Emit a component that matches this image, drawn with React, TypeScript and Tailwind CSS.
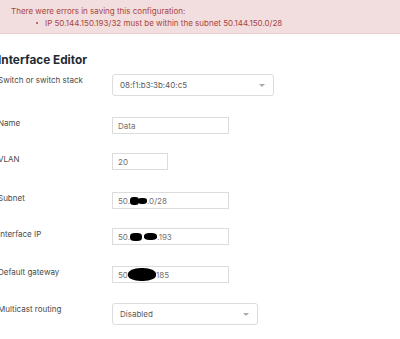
import React from 'react';

function Blob({ w, h = 7, className = '' }: { w: number; h?: number; className?: string }) {
  return (
    <span
      className={`inline-block bg-black rounded-[40%] align-middle ${className}`}
      style={{ width: w, height: h }}
    />
  );
}

function Select({ value, width }: { value: string; width: number }) {
  return (
    <div
      className="h-[22px] border border-[#dcdcdc] rounded-[3px] bg-white flex items-center justify-between pl-[7px] pr-[8px] text-[#5a5a5a]"
      style={{ width }}
    >
      <span>{value}</span>
      <span className="w-0 h-0 border-l-[3px] border-r-[3px] border-t-[3px] border-l-transparent border-r-transparent border-t-[#aaa]" />
    </div>
  );
}

function Input({ width, children }: { width: number; children: React.ReactNode }) {
  return (
    <div
      className="h-[17px] border border-[#dcdcdc] bg-white flex items-center pl-[5px] text-[#707070] whitespace-nowrap overflow-hidden"
      style={{ width }}
    >
      {children}
    </div>
  );
}

function Row({ label, children, className = '' }: { label: string; children: React.ReactNode; className?: string }) {
  return (
    <div className={`flex items-start ${className}`}>
      <div className="w-[114px] shrink-0 pt-[1px] text-[#4a4a4a]">{label}</div>
      {children}
    </div>
  );
}

export default function App() {
  return (
    <div className="w-[400px] h-[339px] bg-white overflow-hidden text-[8px] leading-[10px]" style={{ fontFamily: 'Inter, "Noto Sans", sans-serif' }}>
      <div className="h-[34px] bg-[#f2dede] border-b border-[#ebcfd3] pl-[11px] pt-[6px] text-[#a94442]">
        <div>There were errors in saving this configuration:</div>
        <div className="flex items-center mt-[2px] pl-[25px]">
          <span className="w-[2px] h-[2px] rounded-full bg-[#a94442] mr-[7px]" />
          <span>IP 50.144.150.193/32 must be within the subnet 50.144.150.0/28</span>
        </div>
      </div>

      <div className="-ml-[2px]">
        <h1 className="mt-[19px] text-[11.8px] leading-[14px] font-bold text-[#1e2a36]">Interface Editor</h1>

        <Row label="Switch or switch stack" className="mt-[7px]">
          <Select value="08:f1:b3:3b:40:c5" width={162} />
        </Row>

        <Row label="Name" className="mt-[21px]">
          <Input width={117}>Data</Input>
        </Row>

        <Row label="VLAN" className="mt-[19px]">
          <Input width={56}>20</Input>
        </Row>

        <Row label="Subnet" className="mt-[22px]">
          <Input width={117}>
            50.<Blob w={9} h={8} /><Blob w={9} h={6} className="-ml-[1px]" />.0/28
          </Input>
        </Row>

        <Row label="Interface IP" className="mt-[19px]">
          <Input width={117}>
            50.<Blob w={12} h={8} /><span className="w-[2px] inline-block" /><Blob w={13} h={7} />.193
          </Input>
        </Row>

        <Row label="Default gateway" className="mt-[21px]">
          <Input width={117}>
            50<Blob w={28} h={13} className="rounded-[45%]" />185
          </Input>
        </Row>

        <Row label="Multicast routing" className="mt-[20px]">
          <Select value="Disabled" width={146} />
        </Row>
      </div>
    </div>
  );
}
